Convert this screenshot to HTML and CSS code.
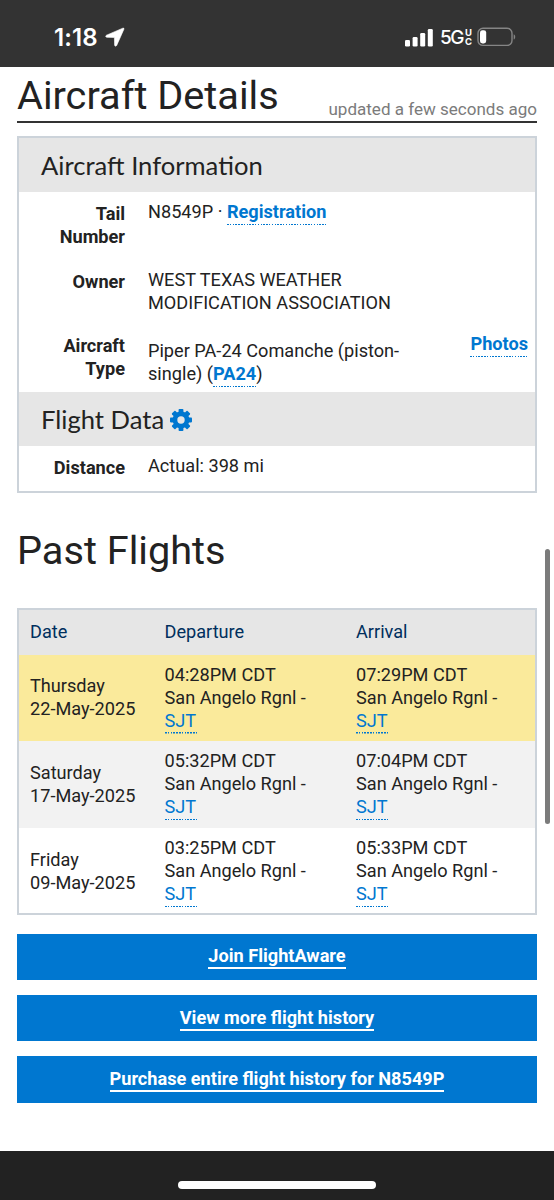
FILE: index.html
```html
<!DOCTYPE html>
<html lang="en">
<head>
  <meta charset="UTF-8">
  <meta name="viewport" content="width=device-width, initial-scale=1.0">
  <title>Aircraft Details</title>
  <link rel="stylesheet" href="styles.css">
</head>
<body>
  <header class="status-bar">
    <div class="clock">
      <span>1:18</span>
      <svg class="location" width="20" height="20" viewBox="0 0 20 20">
        <path d="M17.800 1.200 1.500 8.200c-1.200.6-.9 2.100.4 2.100l7.500.2.200 7.500c0 1.300 1.500 1.600 2.100.4L18.900 2.200c.3-.8-.3-1.300-1.100-1z" fill="#fff" stroke="#fff" stroke-width=".6"/>
      </svg>
    </div>
    <div class="indicators">
      <svg class="signal" width="28" height="18" viewBox="0 0 28 18">
        <rect x="0" y="11" width="5" height="6.500" rx="1.300" fill="#fff"/>
        <rect x="7.600" y="8" width="5" height="9.500" rx="1.300" fill="#fff"/>
        <rect x="15.200" y="4" width="5" height="13.500" rx="1.300" fill="#fff"/>
        <rect x="22.800" y="0" width="5" height="17.500" rx="1.300" fill="#fff"/>
      </svg>
      <span class="network">5G</span>
      <span class="network-uc"><span>U</span><span>C</span></span>
      <svg class="battery" width="40" height="20" viewBox="0 0 40 20">
        <rect x="1" y="1.200" width="34" height="17.200" rx="5" fill="none" stroke="#858585" stroke-width="1.400"/>
        <rect x="3" y="3.200" width="6.200" height="13.200" rx="2.400" fill="#fff"/>
        <path d="M36.700 7.200c2 .8 2 4.600 0 5.400z" fill="#858585"/>
      </svg>
    </div>
  </header>

  <main class="main">
    <div class="page-title">
      <h1>Aircraft Details</h1>
      <span class="updated">updated a few seconds ago</span>
    </div>

    <section class="info-card">
      <h3 class="card-title">Aircraft Information</h3>
      <div class="info-row">
        <div class="label">Tail<br>Number</div>
        <div class="value">N8549P · <a class="link" href="#">Registration</a></div>
      </div>
      <div class="info-row">
        <div class="label">Owner</div>
        <div class="value">WEST TEXAS WEATHER<br>MODIFICATION ASSOCIATION</div>
      </div>
      <div class="info-row type-row">
        <div class="label">Aircraft<br>Type</div>
        <div class="value">Piper PA-24 Comanche (piston-<br>single) (<a class="link" href="#">PA24</a>)</div>
        <div class="photos"><a class="link" href="#">Photos</a></div>
      </div>
      <h3 class="card-title">
        Flight Data
        <svg class="gear" width="22" height="22" viewBox="-11 -11 22 22">
          <g fill="#0077d0">
            <rect x="-2.400" y="-11" width="4.800" height="22" rx=".8"/>
            <rect x="-2.400" y="-11" width="4.800" height="22" rx=".8" transform="rotate(45)"/>
            <rect x="-2.400" y="-11" width="4.800" height="22" rx=".8" transform="rotate(90)"/>
            <rect x="-2.400" y="-11" width="4.800" height="22" rx=".8" transform="rotate(135)"/>
            <circle r="8.400"/>
          </g>
          <circle r="3.700" fill="#e6e6e6"/>
        </svg>
      </h3>
      <div class="info-row distance-row">
        <div class="label">Distance</div>
        <div class="value">Actual: 398 mi</div>
      </div>
    </section>

    <h2 class="section-title">Past Flights</h2>

    <table class="flights">
      <thead>
        <tr>
          <th class="col-date">Date</th>
          <th class="col-departure">Departure</th>
          <th>Arrival</th>
        </tr>
      </thead>
      <tbody>
        <tr class="current">
          <td>Thursday<br>22-May-2025</td>
          <td>04:28PM CDT<br>San Angelo Rgnl -<br><a class="airport" href="#">SJT</a></td>
          <td>07:29PM CDT<br>San Angelo Rgnl -<br><a class="airport" href="#">SJT</a></td>
        </tr>
        <tr class="even">
          <td>Saturday<br>17-May-2025</td>
          <td>05:32PM CDT<br>San Angelo Rgnl -<br><a class="airport" href="#">SJT</a></td>
          <td>07:04PM CDT<br>San Angelo Rgnl -<br><a class="airport" href="#">SJT</a></td>
        </tr>
        <tr class="last">
          <td>Friday<br>09-May-2025</td>
          <td>03:25PM CDT<br>San Angelo Rgnl -<br><a class="airport" href="#">SJT</a></td>
          <td>05:33PM CDT<br>San Angelo Rgnl -<br><a class="airport" href="#">SJT</a></td>
        </tr>
      </tbody>
    </table>

    <div class="actions">
      <a class="btn" href="#"><span>Join FlightAware</span></a>
      <a class="btn" href="#"><span>View more flight history</span></a>
      <a class="btn" href="#"><span>Purchase entire flight history for N8549P</span></a>
    </div>
  </main>

  <footer class="bottom-bar">
    <div class="home-indicator"></div>
  </footer>

  <div class="scrollbar"></div>
</body>
</html>
```
FILE: styles.css
```css
* {
  box-sizing: border-box;
}

body {
  margin: 0;
  height: 1200px;
  display: flex;
  flex-direction: column;
  overflow: hidden;
  position: relative;
  background: #fff;
  color: #222;
  font-family: Roboto, "Liberation Sans", sans-serif;
  font-size: 18.15px;
  line-height: 23px;
}

h1, h2, h3 {
  margin: 0;
  font-weight: normal;
}

a {
  color: #0077d0;
  text-decoration: none;
}

/* Status bar */
.status-bar {
  height: 67px;
  flex: none;
  display: flex;
  justify-content: space-between;
  padding: 26px 37px 0 54px;
  background: #333;
  color: #fff;
  font-family: Inter, sans-serif;
}

.clock {
  display: flex;
  height: 22px;
  align-items: center;
  gap: 7px;
  font-size: 24px;
  font-weight: 600;
  letter-spacing: 0.1px;
}

.indicators {
  display: flex;
  height: 22px;
  align-items: center;
}

.signal {
  margin-top: 1px;
}

.network {
  margin: 1px 0 0 7px;
  font-size: 19px;
  font-weight: 500;
  letter-spacing: -1.5px;
}

.network-uc {
  display: flex;
  flex-direction: column;
  margin: 0 5px 0 2px;
  font-size: 9.5px;
  line-height: 9px;
  font-weight: 700;
}

.network-uc span {
  height: 9px;
  overflow: hidden;
}

/* Content */
.main {
  flex: 1;
  padding: 0 17px;
}

.page-title {
  height: 56px;
  display: flex;
  justify-content: space-between;
  align-items: flex-start;
  padding-top: 5px;
  border-bottom: 2px solid #333;
}

.page-title h1,
.section-title {
  font-size: 39.7px;
  line-height: 48px;
}

.updated {
  padding-top: 26px;
  color: #7b7b7b;
  font-size: 17.05px;
}

.info-card {
  height: 357px;
  margin-top: 13px;
  border: 2px solid #ccd3da;
}

.card-title {
  display: flex;
  align-items: center;
  gap: 6px;
  height: 54px;
  padding: 0 0 0 22px;
  background: #e6e6e6;
  font-family: Lato, sans-serif;
  font-size: 25.6px;
}

.gear {
  margin-top: 2px;
}

.info-row {
  display: grid;
  grid-template-columns: 106px 1fr auto;
  column-gap: 23px;
  height: 68px;
}

.label {
  padding-top: 10px;
  text-align: right;
  font-weight: bold;
}

.value {
  padding-top: 8px;
}

.type-row {
  height: 64px;
}

.type-row .label {
  padding-top: 6px;
}

.type-row .value {
  padding-top: 11px;
}

.photos {
  padding: 4px 7px 0 0;
}

.link {
  font-weight: bold;
}

/* dotted underline, finer than border-style: dotted */
.link,
.airport {
  padding-bottom: 3px;
  background: repeating-linear-gradient(to right, #0077d0 0 1.5px, transparent 1.5px 2.8px) left bottom / 100% 1.5px no-repeat;
}

.airport {
  padding-right: 1px;
}

/* Flights */
.section-title {
  margin-top: 34px;
}

.flights {
  width: 100%;
  height: 307px;
  margin-top: 33px;
  table-layout: fixed;
  border: 2px solid #ccd3da;
  border-spacing: 0;
}

.flights th,
.flights td {
  padding: 0 0 2px 11px;
  text-align: left;
}

.flights th {
  height: 45px;
  background: #e6e6e6;
  color: #002f5d;
  font-weight: normal;
}

.flights td {
  height: 86px;
}

.flights .even td {
  height: 87px;
}

.flights .last td {
  height: 85px;
  padding-bottom: 0;
}

.col-date {
  width: 134.5px;
}

.col-departure {
  width: 191.5px;
}

.current {
  background: #faea9b;
}

.even {
  background: #f2f2f2;
}

/* Buttons */
.actions {
  display: flex;
  flex-direction: column;
  gap: 14.5px;
  margin-top: 18.6px;
}

.btn {
  height: 46.7px;
  padding-top: 10.8px;
  background: #0077d0;
  color: #fff;
  font-weight: bold;
  text-align: center;
}

.btn span {
  padding-bottom: 3px;
  background: linear-gradient(#fff, #fff) left bottom / 100% 2px no-repeat;
}

/* Bottom of the phone screen */
.bottom-bar {
  height: 49px;
  flex: none;
  display: flex;
  justify-content: center;
  padding-top: 30px;
  background: #222;
}

.home-indicator {
  width: 198px;
  height: 8px;
  border-radius: 4px;
  background: #fff;
}

.scrollbar {
  position: absolute;
  top: 549px;
  right: 4px;
  width: 5px;
  height: 275px;
  border-radius: 3px;
  background: #7b7b7b;
}
```
